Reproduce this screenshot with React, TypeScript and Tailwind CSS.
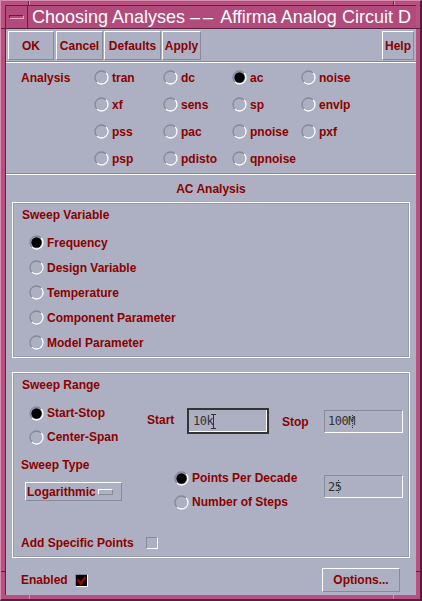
import React from "react";

const analyses = [
  ["tran", "dc", "ac", "noise"],
  ["xf", "sens", "sp", "envlp"],
  ["pss", "pac", "pnoise", "pxf"],
  ["psp", "pdisto", "qpnoise", ""],
];

const sweepVars = [
  "Frequency",
  "Design Variable",
  "Temperature",
  "Component Parameter",
  "Model Parameter",
];

function Radio({ on }: { on?: boolean }) {
  return (
    <svg width="15" height="15" viewBox="0 0 15 15" className="shrink-0">
      <path d="M2.9 12.1A6.5 6.5 0 0 1 12.1 2.9" fill="none" stroke="#85889a" strokeWidth="1.3" />
      <path d="M12.1 2.9A6.5 6.5 0 0 1 2.9 12.1" fill="none" stroke="#ffffff" strokeWidth="1.3" />
      {on && <circle cx="7.5" cy="7.5" r="5.2" fill="#000000" />}
    </svg>
  );
}

function RadioItem({ label, on, h = "h-[25px]" }: { label: string; on?: boolean; h?: string }) {
  return (
    <div className={`flex items-center gap-[3px] ${h}`}>
      <Radio on={on} />
      <span className="whitespace-nowrap">{label}</span>
    </div>
  );
}

function Button({ label, w }: { label: string; w: string }) {
  return (
    <div
      className={`flex h-[29px] ${w} items-center justify-center border-t border-l border-t-white border-l-white border-b border-r border-b-[#878a98] border-r-[#878a98]`}
    >
      {label}
    </div>
  );
}

function Separator() {
  return (
    <div className="flex flex-col">
      <div className="h-px bg-[#878a98]" />
      <div className="h-px bg-white" />
    </div>
  );
}

function Field({ value }: { value: string }) {
  return (
    <div className="flex h-[23px] w-[79px] items-center border-t border-l border-t-[#878a98] border-l-[#878a98] border-b border-r border-b-white border-r-white pl-[3px] font-['DejaVu_Sans_Mono',monospace] text-[12px] font-normal tracking-[-0.5px] text-[#333333]">
      <span>{value}</span>
      <span className="ml-[-3px] inline-block h-[13px] w-0 border-l border-dotted border-[#333333]" />
    </div>
  );
}

export default function App() {
  return (
    <div className="relative h-[601px] w-[422px] overflow-hidden border-l border-t border-[#d68cae] border-r-2 border-b-2 border-r-[#55203f] border-b-[#55203f] bg-[#b8517f] pl-[4px] pt-[4px] pr-[4px] pb-[4px] font-['Liberation_Sans',Arial,sans-serif] text-[12px] font-bold text-[#8b0000]">
      {/* frame resize ticks */}
      <div className="absolute left-[27px] top-[-1px] h-[5px] w-px bg-[#5a2244]" />
      <div className="absolute left-[28px] top-[-1px] h-[5px] w-px bg-[#d68cae]" />
      <div className="absolute left-[392px] top-[-1px] h-[5px] w-px bg-[#5a2244]" />
      <div className="absolute left-[393px] top-[-1px] h-[5px] w-px bg-[#d68cae]" />
      <div className="absolute left-[28px] bottom-[-2px] h-[6px] w-px bg-[#d68cae]" />
      <div className="absolute left-[392px] bottom-[-2px] h-[6px] w-px bg-[#d68cae]" />
      <div className="absolute left-[-1px] top-[27px] h-px w-[5px] bg-[#5a2244]" />
      <div className="absolute left-[-1px] top-[570px] h-px w-[5px] bg-[#5a2244]" />
      <div className="absolute right-[-2px] top-[27px] h-px w-[6px] bg-[#5a2244]" />
      <div className="absolute right-[-2px] top-[570px] h-px w-[6px] bg-[#5a2244]" />

      <div className="flex h-full flex-col border-l border-t border-[#5a2244]">
        {/* title bar */}
        <div className="flex h-[23px] shrink-0 border-b border-[#5a2244] bg-[#b24b7b]">
          <div className="flex w-[22px] shrink-0 items-center justify-center border-r border-[#5a2244]">
            <div className="h-[4px] w-[15px] border-t border-l border-[#5a2244] border-b border-r border-b-[#e7a9c6] border-r-[#e7a9c6] bg-[#b24b7b]" />
          </div>
          <div className="flex-1 overflow-hidden whitespace-nowrap pl-[4px] text-[18px] font-normal leading-[22px] text-white">
            Choosing Analyses <span className="tracking-[3px]">––</span> Affirma Analog Circuit D
          </div>
        </div>

        {/* content */}
        <div className="flex flex-1 flex-col bg-[#adb0c2]">
          <div className="flex h-[32px] shrink-0 pl-[2px] pr-[2px] pt-[2px]">
            <Button label="OK" w="w-[46px]" />
            <div className="ml-[2px]">
              <Button label="Cancel" w="w-[47px]" />
            </div>
            <div className="ml-[1px]">
              <Button label="Defaults" w="w-[57px]" />
            </div>
            <div className="ml-[1px]">
              <Button label="Apply" w="w-[39px]" />
            </div>
            <div className="ml-auto">
              <Button label="Help" w="w-[32px]" />
            </div>
          </div>
          <Separator />

          {/* analysis grid */}
          <div className="flex h-[110px] shrink-0 pt-[2px]">
            <div className="flex h-[25px] w-[88px] shrink-0 items-center pl-[15px]">Analysis</div>
            <div className="grid grid-cols-[69px_69px_69px_69px]">
              {analyses.flat().map((a, i) =>
                a ? <RadioItem key={i} label={a} on={a === "ac"} /> : <div key={i} />
              )}
            </div>
          </div>
          <Separator />

          <div className="flex h-[27px] shrink-0 items-center justify-center">AC Analysis</div>

          {/* sweep variable */}
          <div className="mx-[6px] flex h-[156px] shrink-0 flex-col border border-white outline outline-1 -outline-offset-2 outline-[#9a9dab]">
            <div className="flex h-[23px] items-center pl-[9px]">Sweep Variable</div>
            <div className="mt-[4px] flex flex-col pl-[16px]">
              {sweepVars.map((v, i) => (
                <RadioItem key={v} label={v} on={i === 0} />
              ))}
            </div>
          </div>

          {/* sweep range */}
          <div className="mx-[6px] mt-[14px] flex h-[186px] shrink-0 flex-col border border-white outline outline-1 -outline-offset-2 outline-[#9a9dab]">
            <div className="flex h-[24px] items-center pl-[9px]">Sweep Range</div>
            <div className="mt-[4px] flex">
              <div className="flex w-[134px] shrink-0 flex-col pl-[16px]">
                <RadioItem label="Start-Stop" on h="h-[24px]" />
                <RadioItem label="Center-Span" h="h-[24px]" />
              </div>
              <div className="mt-[7px] flex h-[26px] items-center">
                <div className="w-[40px] pb-[3px]">Start</div>
                <div className="flex h-[26px] w-[82px] items-center border-2 border-[#343434] pl-[4px] font-['DejaVu_Sans_Mono',monospace] text-[12px] font-normal tracking-[-0.5px] text-[#333333] shadow-[inset_-1px_-1px_0_#ffffff]">
                  <span>10k</span>
                  <span className="ml-[-2px] flex h-[15px] flex-col items-center justify-between">
                    <span className="h-px w-[5px] bg-[#333333]" />
                    <span className="w-px flex-1 bg-[#333333]" />
                    <span className="h-px w-[5px] bg-[#333333]" />
                  </span>
                </div>
                <div className="ml-[13px] w-[42px] pt-[2px]">Stop</div>
                <Field value="100M" />
              </div>
            </div>

            <div className="mt-[4px] flex">
              <div className="flex w-[134px] shrink-0 flex-col">
                <div className="flex h-[24px] items-center pl-[8px]">Sweep Type</div>
                <div className="ml-[12px] mt-[5px] flex h-[19px] w-[97px] items-center justify-between border-t border-l border-t-white border-l-white border-b border-r border-b-[#878a98] border-r-[#878a98] pl-[1px] pr-[8px]">
                  <span>Logarithmic</span>
                  <span className="h-[6px] w-[15px] border-t border-l border-t-white border-l-white border-b border-r border-b-[#878a98] border-r-[#878a98]" />
                </div>
              </div>
              <div className="ml-[27px] mt-[13px] flex w-[150px] shrink-0 flex-col">
                <RadioItem label="Points Per Decade" on h="h-[24px]" />
                <RadioItem label="Number of Steps" h="h-[24px]" />
              </div>
              <div className="mt-[22px]">
                <Field value="25" />
              </div>
            </div>

            <div className="mt-[17px] flex h-[24px] items-center pl-[8px]">
              <span className="w-[125px]">Add Specific Points</span>
              <span className="h-[12px] w-[12px] border-t border-l border-t-[#878a98] border-l-[#878a98] border-b border-r border-b-white border-r-white" />
            </div>
          </div>

          {/* bottom row */}
          <div className="mt-[10px] flex h-[24px] shrink-0 items-center justify-between pl-[15px] pr-[16px]">
            <div className="flex items-center">
              <span className="w-[54px]">Enabled</span>
              <span className="flex h-[13px] w-[13px] items-center justify-center border-t border-l border-t-[#878a98] border-l-[#878a98] border-b border-r border-b-white border-r-white bg-black">
                <svg width="11" height="11" viewBox="0 0 11 11">
                  <path d="M1.5 4.5 L4.5 8.5 L9.5 2" fill="none" stroke="#a00000" strokeWidth="2.4" />
                </svg>
              </span>
            </div>
            <div className="flex h-[24px] w-[78px] items-center justify-center border-t border-l border-t-white border-l-white border-b border-r border-b-[#878a98] border-r-[#878a98]">
              Options...
            </div>
          </div>
        </div>
      </div>
    </div>
  );
}
